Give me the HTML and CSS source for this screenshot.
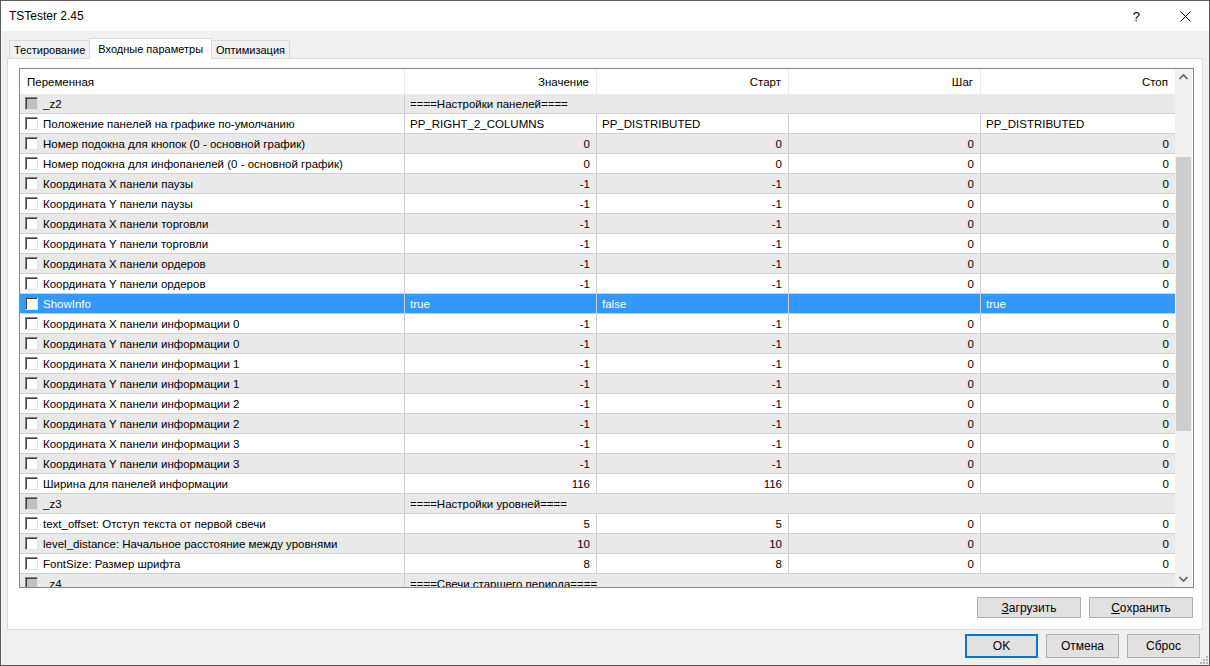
FILE: index.html
```html
<!DOCTYPE html>
<html>
<head>
	<title>TSTester 2.45</title>
	<link rel="stylesheet" href="styles.css">
</head>
<body>
	<div class="window">
		<div class="titlebar">
			<span class="title">TSTester 2.45</span>
			<span class="help">?</span>
			<svg class="close" width="11" height="11" viewBox="0 0 11 11"><path d="M0.5 0.5 L10.5 10.5 M10.5 0.5 L0.5 10.5" stroke="#000" stroke-width="1" fill="none"/></svg>
		</div>
		<div class="content">
			<div class="tabs">
				<div class="tab">Тестирование</div>
				<div class="tab active">Входные параметры</div>
				<div class="tab">Оптимизация</div>
			</div>
			<div class="panel">
				<div class="grid">
					<div class="table">
						<div class="row head">
							<div class="cell">Переменная</div>
							<div class="cell num">Значение</div>
							<div class="cell num">Старт</div>
							<div class="cell num">Шаг</div>
							<div class="cell num">Стоп</div>
						</div>
						<div class="rows">
							<div class="row group">
								<div class="cell name"><span class="chk dim"></span>_z2</div>
								<div class="cell span">====Настройки панелей====</div>
							</div>
							<div class="row">
								<div class="cell name"><span class="chk"></span>Положение панелей на графике по-умолчанию</div>
								<div class="cell">PP_RIGHT_2_COLUMNS</div>
								<div class="cell">PP_DISTRIBUTED</div>
								<div class="cell"></div>
								<div class="cell">PP_DISTRIBUTED</div>
							</div>
							<div class="row alt">
								<div class="cell name"><span class="chk"></span>Номер подокна для кнопок (0 - основной график)</div>
								<div class="cell num">0</div><div class="cell num">0</div><div class="cell num">0</div><div class="cell num">0</div>
							</div>
							<div class="row">
								<div class="cell name"><span class="chk"></span>Номер подокна для инфопанелей (0 - основной график)</div>
								<div class="cell num">0</div><div class="cell num">0</div><div class="cell num">0</div><div class="cell num">0</div>
							</div>
							<div class="row alt">
								<div class="cell name"><span class="chk"></span>Координата X панели паузы</div>
								<div class="cell num">-1</div><div class="cell num">-1</div><div class="cell num">0</div><div class="cell num">0</div>
							</div>
							<div class="row">
								<div class="cell name"><span class="chk"></span>Координата Y панели паузы</div>
								<div class="cell num">-1</div><div class="cell num">-1</div><div class="cell num">0</div><div class="cell num">0</div>
							</div>
							<div class="row alt">
								<div class="cell name"><span class="chk"></span>Координата X панели торговли</div>
								<div class="cell num">-1</div><div class="cell num">-1</div><div class="cell num">0</div><div class="cell num">0</div>
							</div>
							<div class="row">
								<div class="cell name"><span class="chk"></span>Координата Y панели торговли</div>
								<div class="cell num">-1</div><div class="cell num">-1</div><div class="cell num">0</div><div class="cell num">0</div>
							</div>
							<div class="row alt">
								<div class="cell name"><span class="chk"></span>Координата X панели ордеров</div>
								<div class="cell num">-1</div><div class="cell num">-1</div><div class="cell num">0</div><div class="cell num">0</div>
							</div>
							<div class="row">
								<div class="cell name"><span class="chk"></span>Координата Y панели ордеров</div>
								<div class="cell num">-1</div><div class="cell num">-1</div><div class="cell num">0</div><div class="cell num">0</div>
							</div>
							<div class="row selected">
								<div class="cell name"><span class="chk"></span>ShowInfo</div>
								<div class="cell">true</div>
								<div class="cell">false</div>
								<div class="cell"></div>
								<div class="cell">true</div>
							</div>
							<div class="row">
								<div class="cell name"><span class="chk"></span>Координата X панели информации 0</div>
								<div class="cell num">-1</div><div class="cell num">-1</div><div class="cell num">0</div><div class="cell num">0</div>
							</div>
							<div class="row alt">
								<div class="cell name"><span class="chk"></span>Координата Y панели информации 0</div>
								<div class="cell num">-1</div><div class="cell num">-1</div><div class="cell num">0</div><div class="cell num">0</div>
							</div>
							<div class="row">
								<div class="cell name"><span class="chk"></span>Координата X панели информации 1</div>
								<div class="cell num">-1</div><div class="cell num">-1</div><div class="cell num">0</div><div class="cell num">0</div>
							</div>
							<div class="row alt">
								<div class="cell name"><span class="chk"></span>Координата Y панели информации 1</div>
								<div class="cell num">-1</div><div class="cell num">-1</div><div class="cell num">0</div><div class="cell num">0</div>
							</div>
							<div class="row">
								<div class="cell name"><span class="chk"></span>Координата X панели информации 2</div>
								<div class="cell num">-1</div><div class="cell num">-1</div><div class="cell num">0</div><div class="cell num">0</div>
							</div>
							<div class="row alt">
								<div class="cell name"><span class="chk"></span>Координата Y панели информации 2</div>
								<div class="cell num">-1</div><div class="cell num">-1</div><div class="cell num">0</div><div class="cell num">0</div>
							</div>
							<div class="row">
								<div class="cell name"><span class="chk"></span>Координата X панели информации 3</div>
								<div class="cell num">-1</div><div class="cell num">-1</div><div class="cell num">0</div><div class="cell num">0</div>
							</div>
							<div class="row alt">
								<div class="cell name"><span class="chk"></span>Координата Y панели информации 3</div>
								<div class="cell num">-1</div><div class="cell num">-1</div><div class="cell num">0</div><div class="cell num">0</div>
							</div>
							<div class="row">
								<div class="cell name"><span class="chk"></span>Ширина для панелей информации</div>
								<div class="cell num">116</div><div class="cell num">116</div><div class="cell num">0</div><div class="cell num">0</div>
							</div>
							<div class="row group">
								<div class="cell name"><span class="chk dim"></span>_z3</div>
								<div class="cell span">====Настройки уровней====</div>
							</div>
							<div class="row">
								<div class="cell name"><span class="chk"></span>text_offset: Отступ текста от первой свечи</div>
								<div class="cell num">5</div><div class="cell num">5</div><div class="cell num">0</div><div class="cell num">0</div>
							</div>
							<div class="row alt">
								<div class="cell name"><span class="chk"></span>level_distance: Начальное расстояние между уровнями</div>
								<div class="cell num">10</div><div class="cell num">10</div><div class="cell num">0</div><div class="cell num">0</div>
							</div>
							<div class="row">
								<div class="cell name"><span class="chk"></span>FontSize: Размер шрифта</div>
								<div class="cell num">8</div><div class="cell num">8</div><div class="cell num">0</div><div class="cell num">0</div>
							</div>
							<div class="row group">
								<div class="cell name"><span class="chk dim"></span>_z4</div>
								<div class="cell span">====Свечи старшего периода====</div>
							</div>
						</div>
					</div>
					<div class="vscroll">
						<svg class="arrow" width="17" height="17" viewBox="0 0 17 17"><path d="M4.5 10 L8.5 6 L12.5 10" stroke="#606060" stroke-width="1.6" fill="none"/></svg>
						<div class="track"><div class="thumb"></div></div>
						<svg class="arrow" width="17" height="17" viewBox="0 0 17 17"><path d="M4.5 7 L8.5 11 L12.5 7" stroke="#606060" stroke-width="1.6" fill="none"/></svg>
					</div>
				</div>
				<div class="panel-buttons">
					<button class="btn"><u>З</u>агрузить</button>
					<button class="btn"><u>С</u>охранить</button>
				</div>
			</div>
			<div class="footer">
				<button class="btn big default">OK</button>
				<button class="btn big">Отмена</button>
				<button class="btn big">Сброс</button>
			</div>
			<svg class="grip" width="9" height="9" viewBox="0 0 9 9">
				<rect x="7" y="1" width="2" height="2" fill="#b8b8b8"/>
				<rect x="4" y="4" width="2" height="2" fill="#b8b8b8"/>
				<rect x="7" y="4" width="2" height="2" fill="#b8b8b8"/>
				<rect x="1" y="7" width="2" height="2" fill="#b8b8b8"/>
				<rect x="4" y="7" width="2" height="2" fill="#b8b8b8"/>
				<rect x="7" y="7" width="2" height="2" fill="#b8b8b8"/>
			</svg>
		</div>
	</div>
</body>
</html>
```

FILE: styles.css
```css
* {
	box-sizing: border-box;
}

body {
	margin: 0;
	font-family: "Liberation Sans", Arial, sans-serif;
	font-size: 12px;
	color: #000;
}

.window {
	width: 1210px;
	height: 666px;
	border: 1px solid #5c5c5c;
	display: flex;
	flex-direction: column;
	background: #f0f0f0;
}

.titlebar {
	height: 30px;
	background: #fff;
	display: flex;
	align-items: center;
	padding-left: 8px;
	flex-shrink: 0;
}

.title {
	flex: 1;
	font-size: 12px;
}

.help {
	font-size: 13px;
	margin-right: 40px;
}

.close {
	margin-right: 18px;
}

.content {
	flex: 1;
	position: relative;
	display: flex;
	flex-direction: column;
}

/* tab strip */
.tabs {
	display: flex;
	align-items: flex-end;
	height: 27px;
	padding-left: 8px;
	position: relative;
	z-index: 1;
	font-size: 11px;
}

.tab {
	height: 18px;
	line-height: 18px;
	padding: 0 4px;
	border: 1px solid #d9d9d9;
	border-bottom: none;
	background: #f0f0f0;
}

.tab + .tab {
	margin-left: -1px;
}

.tab.active {
	height: 21px;
	line-height: 20px;
	padding: 0 8px;
	background: #fff;
	margin-bottom: -1px;
}

.panel {
	margin: 0 6px 0 6px;
	height: 572px;
	border: 1px solid #d9d9d9;
	background: #fff;
	padding: 9px 8px 11px 11px;
}

/* parameter grid */
.grid {
	height: 520px;
	border: 1px solid #828790;
	display: flex;
	font-size: 11.5px;
}

.table {
	width: 1155px;
	display: flex;
	flex-direction: column;
}

.row {
	display: grid;
	grid-template-columns: 385px 192px 192px 192px 194px;
	height: 20px;
	border-bottom: 1px solid #cfcfcf;
	background: #fff;
}

.row.head {
	height: 25px;
	border-bottom: none;
}

.row.head .cell {
	line-height: 26px;
	border-right-color: #e8e8e8;
	padding-left: 7px;
}

.row.head .cell.num {
	padding-right: 7px;
}

.rows {
	height: 493px;
	overflow: hidden;
}

.row.alt,
.row.group {
	background: #e9e9e9;
}

.row.group {
	grid-template-columns: 385px 1fr;
}

.row.selected {
	background: #3399ff;
	color: #fff;
}

.cell {
	line-height: 20px;
	padding: 0 6px 0 5px;
	border-right: 1px solid #cfcfcf;
	white-space: nowrap;
	overflow: hidden;
}

.cell:last-child {
	border-right: none;
}

.cell.num {
	text-align: right;
}

.cell.name {
	display: flex;
	align-items: center;
	padding-left: 5px;
}

.chk {
	width: 13px;
	height: 13px;
	margin-right: 5px;
	background: #fff;
	border: 1px solid;
	border-color: #808080 #e3e3e3 #e3e3e3 #808080;
	box-shadow: inset 1px 1px 0 #404040;
	flex-shrink: 0;
}

.chk.dim {
	background: #c0c0c0;
}

.vscroll {
	width: 17px;
	background: #f0f0f0;
	display: flex;
	flex-direction: column;
}

.arrow {
	display: block;
	flex-shrink: 0;
}

.track {
	flex: 1;
	padding-top: 71px;
}

.thumb {
	margin-left: 1px;
	width: 15px;
	height: 274px;
	background: #cdcdcd;
}

/* buttons */
.btn {
	font-family: inherit;
	font-size: 12px;
	color: #000;
	background: #e1e1e1;
	border: 1px solid #adadad;
	padding: 0;
	height: 21px;
	width: 104px;
}

.panel-buttons {
	display: flex;
	justify-content: flex-end;
	gap: 8px;
	margin-top: 9px;
	padding-right: 1px;
}

.footer {
	display: flex;
	justify-content: flex-end;
	gap: 8px;
	padding: 4px 9px 0 0;
}

.btn.big {
	width: 73px;
	height: 24px;
}

.btn.default {
	border: 2px solid #0078d7;
}

.grip {
	position: absolute;
	right: 1px;
	bottom: 1px;
}
```
